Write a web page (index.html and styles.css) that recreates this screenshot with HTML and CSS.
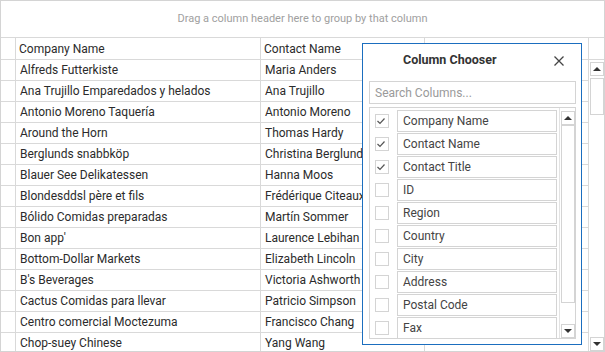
FILE: index.html
```html
<!DOCTYPE html>
<html lang="en">
<head>
    <meta charset="UTF-8">
    <meta name="viewport" content="width=device-width, initial-scale=1.0">
    <title>Customers Grid - Column Chooser</title>
    <link rel="stylesheet" href="styles.css">
</head>
<body>

    <div class="grid">
        <div class="group-panel">Drag a column header here to group by that column</div>

        <div class="row header">
            <div class="cell ind"></div>
            <div class="cell">Company Name</div>
            <div class="cell">Contact Name</div>
            <div class="cell"></div>
            <div class="cell scroll-head"></div>
        </div>

        <div class="body">
            <div class="rows">
                <div class="row"><div class="cell ind"></div><div class="cell">Alfreds Futterkiste</div><div class="cell">Maria Anders</div><div class="cell"></div></div>
                <div class="row"><div class="cell ind"></div><div class="cell">Ana Trujillo Emparedados y helados</div><div class="cell">Ana Trujillo</div><div class="cell"></div></div>
                <div class="row"><div class="cell ind"></div><div class="cell">Antonio Moreno Taquería</div><div class="cell">Antonio Moreno</div><div class="cell"></div></div>
                <div class="row"><div class="cell ind"></div><div class="cell">Around the Horn</div><div class="cell">Thomas Hardy</div><div class="cell"></div></div>
                <div class="row"><div class="cell ind"></div><div class="cell">Berglunds snabbköp</div><div class="cell">Christina Berglund</div><div class="cell"></div></div>
                <div class="row"><div class="cell ind"></div><div class="cell">Blauer See Delikatessen</div><div class="cell">Hanna Moos</div><div class="cell"></div></div>
                <div class="row"><div class="cell ind"></div><div class="cell">Blondesddsl père et fils</div><div class="cell">Frédérique Citeaux</div><div class="cell"></div></div>
                <div class="row"><div class="cell ind"></div><div class="cell">Bólido Comidas preparadas</div><div class="cell">Martín Sommer</div><div class="cell"></div></div>
                <div class="row"><div class="cell ind"></div><div class="cell">Bon app'</div><div class="cell">Laurence Lebihan</div><div class="cell"></div></div>
                <div class="row"><div class="cell ind"></div><div class="cell">Bottom-Dollar Markets</div><div class="cell">Elizabeth Lincoln</div><div class="cell"></div></div>
                <div class="row"><div class="cell ind"></div><div class="cell">B's Beverages</div><div class="cell">Victoria Ashworth</div><div class="cell"></div></div>
                <div class="row"><div class="cell ind"></div><div class="cell">Cactus Comidas para llevar</div><div class="cell">Patricio Simpson</div><div class="cell"></div></div>
                <div class="row"><div class="cell ind"></div><div class="cell">Centro comercial Moctezuma</div><div class="cell">Francisco Chang</div><div class="cell"></div></div>
                <div class="row"><div class="cell ind"></div><div class="cell">Chop-suey Chinese</div><div class="cell">Yang Wang</div><div class="cell"></div></div>
            </div>
            <div class="vscroll">
                <div class="sb-btn"><span class="arrow-up"></span></div>
                <div class="sb-thumb"></div>
                <div class="sb-track"></div>
                <div class="sb-btn"><span class="arrow-down"></span></div>
            </div>
        </div>

        <!-- column chooser popup, lies over the grid -->
        <div class="chooser">
            <div class="chooser-head">
                <span class="chooser-title">Column Chooser</span>
                <svg class="close" width="10" height="10" viewBox="0 0 10 10">
                    <path d="M0.5 0.5 L9.5 9.5 M9.5 0.5 L0.5 9.5" stroke="#444" stroke-width="1.3" fill="none"/>
                </svg>
            </div>
            <input class="search" type="text" placeholder="Search Columns...">
            <div class="col-list">
                <div class="items">
                    <div class="item"><span class="check checked"><svg width="14" height="14" viewBox="0 0 14 14"><path d="M2.5 7 L5 9.5 L9.5 4.5" stroke="#555" stroke-width="1.2" fill="none"/></svg></span><span class="item-box">Company Name</span></div>
                    <div class="item"><span class="check checked"><svg width="14" height="14" viewBox="0 0 14 14"><path d="M2.5 7 L5 9.5 L9.5 4.5" stroke="#555" stroke-width="1.2" fill="none"/></svg></span><span class="item-box">Contact Name</span></div>
                    <div class="item"><span class="check checked"><svg width="14" height="14" viewBox="0 0 14 14"><path d="M2.5 7 L5 9.5 L9.5 4.5" stroke="#555" stroke-width="1.2" fill="none"/></svg></span><span class="item-box">Contact Title</span></div>
                    <div class="item"><span class="check"></span><span class="item-box">ID</span></div>
                    <div class="item"><span class="check"></span><span class="item-box">Region</span></div>
                    <div class="item"><span class="check"></span><span class="item-box">Country</span></div>
                    <div class="item"><span class="check"></span><span class="item-box">City</span></div>
                    <div class="item"><span class="check"></span><span class="item-box">Address</span></div>
                    <div class="item"><span class="check"></span><span class="item-box">Postal Code</span></div>
                    <div class="item"><span class="check"></span><span class="item-box">Fax</span></div>
                </div>
                <div class="list-scroll">
                    <div class="sb-btn"><span class="arrow-up"></span></div>
                    <div class="list-thumb"></div>
                    <div class="sb-track"></div>
                    <div class="sb-btn"><span class="arrow-down"></span></div>
                </div>
            </div>
        </div>
    </div>

</body>
</html>
```
FILE: styles.css
```css
body {
    margin: 0;
    padding: 0;
    font-family: Roboto, "Liberation Sans", sans-serif;
    font-size: 12px;
    color: #2b2b2b;
    background-color: #fff;
}

.grid {
    position: relative;
    width: 605px;
    height: 352px;
    border: 1px solid #d4d4d4;
    box-sizing: border-box;
    display: flex;
    flex-direction: column;
    overflow: hidden;
}

.group-panel {
    height: 37px;
    border-bottom: 1px solid #d9d9d9;
    box-sizing: border-box;
    display: flex;
    align-items: center;
    justify-content: center;
    font-size: 11px;
    color: #a0a0a0;
    padding-bottom: 1px;
}

.row {
    display: grid;
    grid-template-columns: 15px 245px 164px 164px;
    height: 21px;
    border-bottom: 1px solid #d9d9d9;
    box-sizing: border-box;
}

.header {
    grid-template-columns: 15px 245px 164px 164px 15px;
    height: 22px;
    flex-shrink: 0;
}

.cell {
    border-right: 1px solid #d9d9d9;
    padding-left: 4px;
    line-height: 21px;
    white-space: nowrap;
    overflow: hidden;
}

.header .cell {
    padding-left: 3px;
    line-height: 22px;
}

.header .scroll-head {
    border-right: none;
}

.body {
    flex: 1;
    display: flex;
    overflow: hidden;
}

.rows {
    width: 588px;
}

.vscroll {
    width: 15px;
    padding: 2px 0 0 1px;
    box-sizing: border-box;
    display: flex;
    flex-direction: column;
}

.sb-btn {
    width: 14px;
    height: 14px;
    border: 1px solid #d4d4d4;
    box-sizing: border-box;
    background-color: #fff;
    display: flex;
    align-items: center;
    justify-content: center;
    flex-shrink: 0;
}

.arrow-up,
.arrow-down {
    width: 0;
    height: 0;
    border-left: 4px solid transparent;
    border-right: 4px solid transparent;
}

.arrow-up {
    border-bottom: 4px solid #333;
}

.arrow-down {
    border-top: 4px solid #333;
}

.sb-thumb {
    width: 14px;
    height: 37px;
    margin-top: 2px;
    border: 1px solid #d4d4d4;
    box-sizing: border-box;
}

.sb-track {
    flex: 1;
}

/* column chooser */
.chooser {
    position: absolute;
    left: 361px;
    top: 42px;
    width: 220px;
    height: 302px;
    border: 1px solid #1b6ebf;
    box-sizing: border-box;
    background-color: #fff;
}

.chooser-head {
    height: 37px;
    padding-bottom: 6px;
    box-sizing: border-box;
    display: flex;
    align-items: center;
}

.chooser-title {
    flex: 1;
    padding-left: 40px;
    font-size: 12.5px;
    font-weight: bold;
    color: #333;
}

.close {
    margin-right: 17px;
    margin-top: 2px;
}

.search {
    display: block;
    width: 207px;
    height: 23px;
    margin: 0 0 3px 6px;
    padding: 0 0 0 5px;
    border: 1px solid #d4d4d4;
    box-sizing: border-box;
    font-family: Roboto, "Liberation Sans", sans-serif;
    font-size: 12px;
    outline: none;
}

.search::placeholder {
    color: #9a9a9a;
}

.col-list {
    width: 207px;
    height: 232px;
    margin-left: 6px;
    border: 1px solid #d4d4d4;
    box-sizing: border-box;
    display: flex;
    overflow: hidden;
}

.items {
    width: 189px;
    padding: 2px 0 0 5px;
    box-sizing: border-box;
}

.item {
    display: flex;
    align-items: center;
    height: 22px;
    margin-bottom: 1px;
}

.check {
    width: 14px;
    height: 14px;
    border: 1px solid #d4d4d4;
    box-sizing: border-box;
    margin-right: 8px;
    flex-shrink: 0;
}

.check svg {
    display: block;
    margin: -1px 0 0 -1px;
}

.item-box {
    width: 160px;
    height: 22px;
    border: 1px solid #d4d4d4;
    box-sizing: border-box;
    padding-left: 5px;
    line-height: 21px;
    color: #444;
    overflow: hidden;
    flex-shrink: 0;
}

.list-scroll {
    width: 16px;
    padding: 3px 1px 0 1px;
    border-left: 1px solid #e3e3e3;
    box-sizing: border-box;
    display: flex;
    flex-direction: column;
}

.list-thumb {
    width: 14px;
    height: 178px;
    border: 1px solid #d4d4d4;
    box-sizing: border-box;
}
```
